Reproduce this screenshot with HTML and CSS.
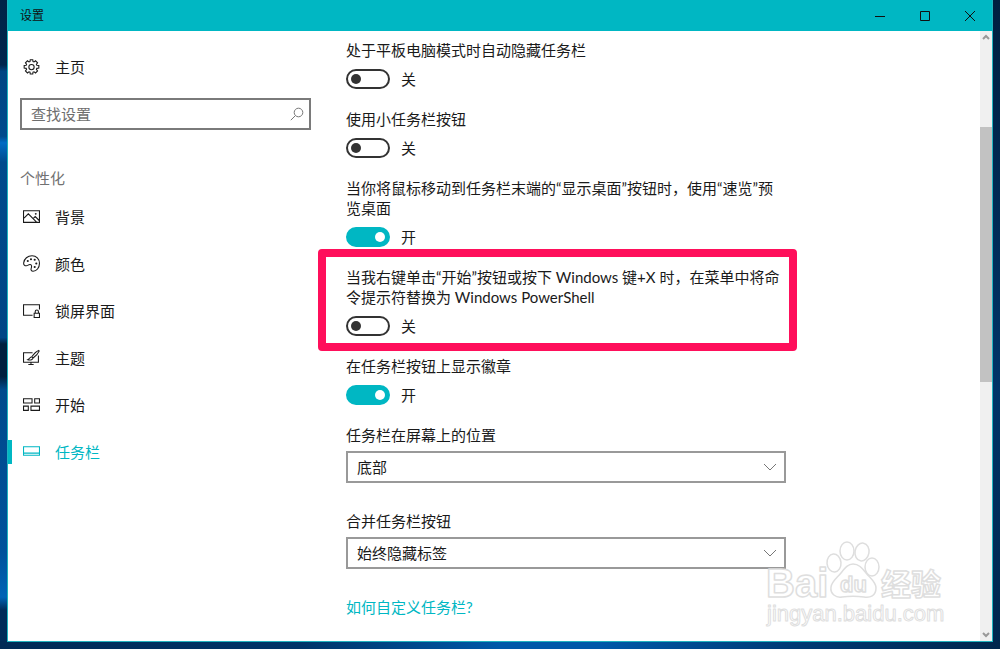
FILE: index.html
```html
<!DOCTYPE html>
<html lang="zh-CN">
<head>
<meta charset="utf-8">
<title>设置</title>
<link rel="stylesheet" href="styles.css">
</head>
<body>
<div class="window">
  <header class="titlebar">
    <span class="titlebar-text">设置</span>
    <div class="caption">
      <button class="caption-btn" aria-label="最小化"><svg width="12" height="12" viewBox="0 0 12 12"><path d="M1 6.5h10"/></svg></button>
      <button class="caption-btn" aria-label="最大化"><svg width="12" height="12" viewBox="0 0 12 12"><path d="M1.5 1.5h9v9h-9z"/></svg></button>
      <button class="caption-btn" aria-label="关闭"><svg width="12" height="12" viewBox="0 0 12 12"><path d="M1 1l10 10M11 1L1 11"/></svg></button>
    </div>
  </header>

  <div class="body">
    <nav class="sidebar">
      <a class="home" href="#">
        <svg class="icon" viewBox="0 0 16 16"><path d="M6.6 2.4 6.8.7h2.4l.2 1.7 1 .4 1.400-1.100 1.900 1.900-1.100 1.400.4 1 1.900.2v2.400l-1.900.2-.4 1 1.100 1.400-1.900 1.900-1.400-1.100-1 .4-.2 1.700H6.800l-.2-1.700-1-.4-1.400 1.100-1.900-1.900 1.100-1.400-.4-1-1.900-.2V6.200L3 6l.4-1-1.100-1.400 1.900-1.900L5.600 2.800z"/><circle cx="8" cy="7.600" r="2.500"/></svg>
        <span>主页</span>
      </a>
      <div class="search">
        <input class="search-input" type="text" placeholder="查找设置" aria-label="查找设置">
        <svg class="search-icon" width="14" height="14" viewBox="0 0 14 14"><circle cx="8.500" cy="5.500" r="4.300"/><path d="M5.400 8.600.8 13.200"/></svg>
      </div>
      <h2 class="section">个性化</h2>
      <a class="item" href="#">
        <svg class="icon" viewBox="0 0 16 16"><path d="M.5 2.500h15v11H.5zM1 9.500l4-4 8 8M9.500 10l2-2 4 4"/><circle cx="12" cy="5.500" r=".4"/></svg>
        <span>背景</span>
      </a>
      <a class="item" href="#">
        <svg class="icon" viewBox="0 0 16 16"><path d="M.6 7.500C1 3.500 4.500.700 8.500.700c4 0 7 3 7 7.100 0 4.300-2.800 7.500-6 7.500-1.800 0-2.300-1.400-1.800-2.700.7-1.800.5-3.500-.9-3.700-1.700-.2-2.100 1.300-3.600 1.300C1.500 10.200.500 9.100.6 7.500z"/><g class="dots"><circle cx="4.500" cy="5.700" r="1"/><circle cx="7.500" cy="4" r="1"/><circle cx="11" cy="4.500" r="1"/><circle cx="12.500" cy="8" r="1"/><circle cx="11" cy="11.300" r="1"/></g></svg>
        <span>颜色</span>
      </a>
      <a class="item" href="#">
        <svg class="icon" viewBox="0 0 16 16"><path d="M9 12.500H.5v-10h15V7M10.500 10.500h5v4h-5zM11.500 10.500V9a1.500 1.500 0 0 1 3 0v1.500"/></svg>
        <span>锁屏界面</span>
      </a>
      <a class="item" href="#">
        <svg class="icon" viewBox="0 0 16 16"><path d="M9 3.500H.5v9h14V6M7.500 12.500v2M5 14.500h5M14.800 1.300c-2 .7-5 3.700-6.500 6l1.200 1.200c2.300-1.700 5-4.700 5.700-6.500zM8.200 7.500c-1.700 0-2 1.800-3.700 2.600 2 .7 4.600.2 4.900-1.500"/></svg>
        <span>主题</span>
      </a>
      <a class="item" href="#">
        <svg class="icon" viewBox="0 0 16 16"><path d="M.5 2.500h8v4h-8zM11 2.500h4.500v4H11zM.5 9.500H5v4H.5zM7.500 9.500h8v4h-8z"/></svg>
        <span>开始</span>
      </a>
      <a class="item active" href="#" aria-current="page">
        <svg class="icon" viewBox="0 0 16 16"><path d="M.5 3.500h15v8H.5zM.5 9.500h15"/></svg>
        <span>任务栏</span>
      </a>
    </nav>

    <main class="content">
      <section class="setting">
        <label for="t1">处于平板电脑模式时自动隐藏任务栏</label>
        <div class="toggle-row"><input class="toggle" type="checkbox" role="switch" id="t1"><span>关</span></div>
      </section>
      <section class="setting">
        <label for="t2">使用小任务栏按钮</label>
        <div class="toggle-row"><input class="toggle" type="checkbox" role="switch" id="t2"><span>关</span></div>
      </section>
      <section class="setting">
        <label for="t3">当你将鼠标移动到任务栏末端的“显示桌面”按钮时，使用“速览”预览桌面</label>
        <div class="toggle-row"><input class="toggle" type="checkbox" role="switch" id="t3" checked><span>开</span></div>
      </section>
      <section class="setting highlighted">
        <label for="t4">当我右键单击“开始”按钮或按下 Windows 键+X 时，在菜单中将命令提示符替换为 Windows PowerShell</label>
        <div class="toggle-row"><input class="toggle" type="checkbox" role="switch" id="t4"><span>关</span></div>
      </section>
      <section class="setting">
        <label for="t5">在任务栏按钮上显示徽章</label>
        <div class="toggle-row"><input class="toggle" type="checkbox" role="switch" id="t5" checked><span>开</span></div>
      </section>
      <section class="setting choice">
        <label for="s1">任务栏在屏幕上的位置</label>
        <div class="select-box">
          <select class="select" id="s1"><option>底部</option></select>
          <svg class="chevron" width="14" height="8" viewBox="0 0 14 8"><path d="M1 1l6 6 6-6"/></svg>
        </div>
      </section>
      <section class="setting choice">
        <label for="s2">合并任务栏按钮</label>
        <div class="select-box">
          <select class="select" id="s2"><option>始终隐藏标签</option></select>
          <svg class="chevron" width="14" height="8" viewBox="0 0 14 8"><path d="M1 1l6 6 6-6"/></svg>
        </div>
      </section>
      <a class="help" href="#">如何自定义任务栏?</a>
    </main>

    <div class="scrollbar" aria-hidden="true">
      <svg class="arrow" viewBox="0 0 12 12"><path d="M3 8l3-3 3 3"/></svg>
      <div class="track-above"></div>
      <div class="thumb"></div>
      <div class="track-below"></div>
      <svg class="arrow" viewBox="0 0 12 12"><path d="M3 4l3 3 3-3"/></svg>
    </div>
  </div>

  <svg class="watermark" width="184" height="90" viewBox="0 0 184 90" aria-hidden="true">
    <g class="paw">
      <ellipse cx="69" cy="22" rx="7" ry="9" transform="rotate(-5 69 22)"/>
      <ellipse cx="82" cy="10" rx="7" ry="9"/>
      <ellipse cx="97" cy="11" rx="7" ry="9" transform="rotate(10 97 11)"/>
      <ellipse cx="107" cy="26" rx="7" ry="9"/>
      <path d="M88 23c6 0 9 4 13 9 5 6 10 9 10 15 0 8-6 10-12 9-8-1-14-1-22 0-6 1-12-3-11-10 1-6 6-9 10-14 4-5 7-9 12-9z"/>
    </g>
    <g class="mark-text">
      <text class="mark-large" x="1" y="56">Bai</text>
      <text class="mark-du" x="75" y="51">du</text>
      <text class="mark-cjk" x="116" y="54">经验</text>
      <text class="mark-url" x="2" y="80">jingyan.baidu.com</text>
    </g>
  </svg>
</div>
</body>
</html>
```
FILE: styles.css
```css
* {
  box-sizing: border-box;
}

body {
  margin: 0;
  min-height: 100vh;
  padding: 0 7px 7px;
  display: flex;
  background:
    linear-gradient(90deg, #002a55, #003468 30%, #0058a8 50%, #0058a8 60%, #003a73 80%, #00264d) bottom / 100% 8px no-repeat,
    linear-gradient(#002347 0, #00264d 10%, #004582 11%, #004a8c 21%, #006cc4 22%, #004a8c 25%, #004585 52%, #00203f 53%, #00203f 58%, #004a8c 60%, #00529b 85%, #0063b5 92%, #002c59 94%, #002c59) left / 8px 100% no-repeat,
    linear-gradient(#001f40, #003468 60%, #00264d) #00264d;
  color: #1a1a1a;
  font: 15px/20px Lato, "Noto Sans CJK SC", sans-serif;
}

a {
  color: inherit;
  text-decoration: none;
}

svg {
  fill: none;
  stroke: currentColor;
}

.window {
  position: relative;
  flex: 1;
  display: flex;
  flex-direction: column;
  border: 1px solid #1fb3bf;
  border-top: 0;
  background: #fff;
}

.titlebar {
  display: flex;
  justify-content: space-between;
  height: 31px;
  padding-left: 12px;
  background: #00b7c3;
  color: #101010;
}

.titlebar-text {
  font-size: 12px;
  line-height: 31px;
}

.caption {
  display: flex;
}

.caption-btn {
  display: grid;
  place-items: center;
  width: 45px;
  padding: 0;
  border: 0;
  background: none;
  color: #101010;
}

.body {
  flex: 1;
  display: grid;
  grid-template-columns: 338px 1fr 12px;
}

.sidebar {
  padding: 26px 35px 0 0;
}

.icon {
  width: 17px;
  height: 17px;
  flex: none;
}

.home,
.item {
  display: flex;
  align-items: center;
  gap: 15px;
  padding-left: 15px;
}

.search {
  position: relative;
  margin: 21px 0 0 12px;
}

.search-input {
  display: block;
  width: 100%;
  height: 32px;
  padding: 0 30px 0 9px;
  border: 2px solid #7a7a7a;
  background: #fff;
  color: #1a1a1a;
  font: inherit;
}

.search-input::placeholder {
  color: #6e6e6e;
  opacity: 1;
}

.search-icon {
  position: absolute;
  top: 9px;
  right: 7px;
  color: #777;
}

.section {
  margin: 38px 0 5px 12px;
  color: #717171;
  font-size: 15px;
  font-weight: 400;
}

.item {
  position: relative;
  height: 47px;
}

.active {
  color: #00b7c3;
}

.active::before {
  content: "";
  position: absolute;
  top: 12px;
  bottom: 11px;
  left: 0;
  width: 4px;
  background: #00b7c3;
}

.dots {
  fill: currentColor;
  stroke: none;
}

.content {
  width: 440px;
  padding: 9px 0 24px;
}

.setting {
  position: relative;
  display: grid;
  gap: 9px;
  margin-bottom: 20px;
}

.toggle-row {
  display: flex;
  align-items: center;
  gap: 11px;
  height: 20px;
}

.toggle {
  appearance: none;
  display: flex;
  align-items: center;
  width: 44px;
  height: 20px;
  margin: 0;
  padding: 0 3px;
  border: 2px solid #333;
  border-radius: 10px;
}

.toggle::before {
  content: "";
  width: 10px;
  height: 10px;
  border-radius: 50%;
  background: #333;
}

.toggle:checked {
  justify-content: flex-end;
  border-color: #00b7c3;
  background: #00b7c3;
}

.toggle:checked::before {
  background: #fff;
}

.highlighted::after {
  content: "";
  position: absolute;
  inset: -18px -11px -15px -28px;
  border: 8px solid #ff0f5b;
  border-radius: 4px;
  pointer-events: none;
}

.choice {
  gap: 6px;
  margin-bottom: 28px;
}

.select-box {
  position: relative;
}

.select {
  appearance: none;
  display: block;
  width: 100%;
  height: 32px;
  padding: 0 32px 0 9px;
  border: 2px solid #999;
  border-radius: 0;
  background: #fff;
  color: #1a1a1a;
  font: inherit;
}

.chevron {
  position: absolute;
  top: 12px;
  right: 9px;
  color: #777;
}

.help {
  color: #00b7c3;
}

.scrollbar {
  display: flex;
  flex-direction: column;
  background: #f0f0f0;
  color: #999;
}

.arrow {
  width: 12px;
  height: 12px;
  stroke-width: 2;
}

.track-above {
  flex: 84;
}

.thumb {
  flex: 255;
  background: #c2c2c2;
}

.track-below {
  flex: 247;
}

.watermark {
  position: absolute;
  right: 43px;
  bottom: 10px;
  fill: #fff;
  stroke: #dedede;
  stroke-width: 1.5;
  stroke-linejoin: round;
}

.mark-text {
  font-family: "Liberation Sans", "Noto Sans CJK SC", sans-serif;
  font-weight: 700;
}

.mark-large {
  font-size: 40px;
}

.mark-du {
  font-size: 22px;
}

.mark-cjk {
  font-size: 30px;
}

.mark-url {
  font-size: 22px;
  font-weight: 400;
  stroke-width: 1;
}
```
